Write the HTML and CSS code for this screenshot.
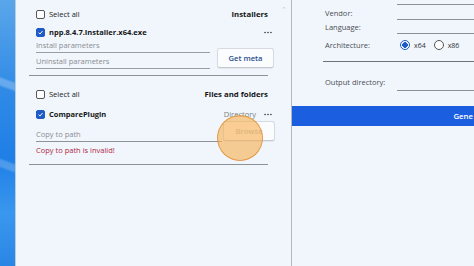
FILE: index.html
```html
<!DOCTYPE html>
<html>
<head>
<meta charset="utf-8">
<link rel="stylesheet" href="styles.css">
</head>
<body>
<div class="screen">
  <div class="desktop"></div>
  <div class="window">
    <section class="left">
      <span class="scroll-up">&#8963;</span>
      <div class="head">
        <label class="check"><span class="box"></span>Select all</label>
        <span class="title">Installers</span>
      </div>
      <div class="item">
        <span class="box checked"><svg viewBox="0 0 10 10"><path d="M2.2 5.2 L4.2 7.2 L7.9 3" fill="none" stroke="#fff" stroke-width="1.4"/></svg></span>
        <span class="name">npp.8.4.7.Installer.x64.exe</span>
        <svg class="more" viewBox="0 0 9 3"><circle cx="1.2" cy="1.5" r="0.9"/><circle cx="4.5" cy="1.5" r="0.9"/><circle cx="7.8" cy="1.5" r="0.9"/></svg>
      </div>
      <div class="params">
        <div class="fields">
          <div class="field">Install parameters</div>
          <div class="field">Uninstall parameters</div>
        </div>
        <button class="btn">Get meta</button>
      </div>
      <div class="sep"></div>

      <div class="head head2">
        <label class="check"><span class="box"></span>Select all</label>
        <span class="title">Files and folders</span>
      </div>
      <div class="item">
        <span class="box checked"><svg viewBox="0 0 10 10"><path d="M2.2 5.2 L4.2 7.2 L7.9 3" fill="none" stroke="#fff" stroke-width="1.4"/></svg></span>
        <span class="name">ComparePlugin</span>
        <span class="dir">Directory</span>
        <svg class="more" viewBox="0 0 9 3"><circle cx="1.2" cy="1.5" r="0.9"/><circle cx="4.5" cy="1.5" r="0.9"/><circle cx="7.8" cy="1.5" r="0.9"/></svg>
      </div>
      <div class="pathrow">
        <div class="field field-path">Copy to path</div>
        <button class="btn btn-disabled">Browse</button>
        <span class="click-marker"></span>
      </div>
      <div class="error">Copy to path is invalid!</div>
      <div class="sep sep2"></div>
    </section>
    <div class="divider"></div>
    <section class="right">
      <div class="row row-top"><span class="label"></span><span class="line"></span></div>
      <div class="row row-vendor"><span class="label">Vendor:</span><span class="line"></span></div>
      <div class="row row-lang"><span class="label">Language:</span><span class="line"></span></div>
      <div class="row row-arch">
        <span class="label">Architecture:</span>
        <span class="radios">
          <span class="radio on"></span><span class="rlabel">x64</span>
          <span class="radio"></span><span class="rlabel">x86</span>
        </span>
      </div>
      <div class="rsep"></div>
      <div class="row row-out"><span class="label">Output directory:</span><span class="line"></span></div>
      <div class="generate"><span class="gen-text">Gene</span></div>
    </section>
  </div>
</div>
</body>
</html>
```
FILE: styles.css
```css
* { box-sizing: border-box; }
html, body { margin: 0; padding: 0; }
body {
  width: 474px;
  height: 266px;
  overflow: hidden;
  font-family: "Open Sans", "Noto Sans", sans-serif;
  font-size: 7.5px;
  color: #1b1b1b;
  background: #eef5fc;
}
.screen { display: flex; width: 474px; height: 266px; }
.desktop {
  width: 16px;
  flex: none;
  background:
    linear-gradient(200deg, transparent 0 30%, rgba(255,255,255,0.25) 31% 33%, transparent 34% 60%, rgba(255,255,255,0.2) 61% 63%, transparent 64%),
    linear-gradient(180deg, #5aa6ea 0%, #2f8ae6 35%, #1f7fe6 60%, #3a97ee 80%, #2a86e4 100%);
  border-right: 1px solid #b7cde2;
}
.window {
  flex: 1;
  display: flex;
  background: #f0f6fc;
}
.left {
  position: relative;
  width: 275px;
  flex: none;
  padding: 6px 16px 0 20px;
  display: flex;
  flex-direction: column;
}
.scroll-up {
  position: absolute;
  right: 4px;
  top: 5px;
  font-size: 7px;
  color: #c8ccd2;
}
.head, .item {
  height: 16px;
  display: flex;
  align-items: center;
}
.item { margin-top: 2px; }
.head2 { margin-top: 10px; }
.head2 + .item { margin-top: 4px; }
.check { display: flex; align-items: center; color: #222; }
.box {
  width: 9px;
  height: 9px;
  border: 1px solid #555;
  border-radius: 2px;
  margin-right: 4px;
  background: #fff;
  flex: none;
  display: inline-flex;
}
.box.checked { background: #1e5bc6; border-color: #1e5bc6; }
.box svg { width: 100%; height: 100%; }
.title { margin-left: auto; font-weight: 700; color: #151515; padding-right: 7px; font-size: 7.8px; }
.name { font-weight: 700; color: #151515; }
.dir { margin-left: auto; color: #7b7f86; margin-right: 8px; }
.more { margin-left: auto; width: 8px; height: 3px; fill: #333; margin-right: 3px; flex: none; }
.dir + .more { margin-left: 0; }
.params { display: flex; align-items: flex-end; margin-top: -3px; }
.fields { flex: 1; }
.field {
  line-height: 14px;
  padding-top: 1px;
  color: #8a8d92;
  border-bottom: 1px solid #9a9ea4;
  margin-right: 7px;
}
.btn {
  font-family: inherit;
  font-size: 7.6px;
  font-weight: 600;
  color: #2a4f8f;
  background: #fbfcfe;
  border: 1px solid #d6dbe2;
  border-bottom-color: #c3c8cf;
  border-radius: 3px;
  width: 57px;
  height: 20px;
  padding: 0;
  box-shadow: 0 1px 1px rgba(0,0,0,0.06);
  margin-bottom: 1px;
  margin-right: 1px;
}
.sep {
  height: 1px;
  background: #8d9196;
  margin: 6px 7px 0 -7px;
}
.sep2 { margin-top: 7px; }
.pathrow {
  position: relative;
  display: flex;
  align-items: flex-start;
  margin-top: -1px;
}
.field-path {
  flex: 1;
  padding-top: 6px;
  margin-right: 1px;
  border-bottom-color: #8f9399;
}
.btn-disabled {
  width: 52px;
  color: #b9bcc2;
  font-weight: 600;
  margin: 0;
}
.click-marker {
  position: absolute;
  left: 181px;
  top: -6px;
  width: 46px;
  height: 46px;
  border-radius: 50%;
  background: rgba(247, 176, 82, 0.62);
  border: 1px solid rgba(222, 140, 50, 0.8);
}
.error {
  color: #b3263f;
  line-height: 14px;
  margin-top: 1px;
}
.divider {
  width: 1px;
  flex: none;
  background: #b5b8bd;
}
.right {
  flex: 1;
  display: flex;
  flex-direction: column;
  min-width: 0;
}
.row {
  display: flex;
  align-items: flex-end;
  padding-left: 33px;
}
.label {
  width: 72px;
  flex: none;
  color: #4a4d52;
  line-height: 12px;
  padding-bottom: 1px;
}
.line {
  flex: 1;
  border-bottom: 1px solid #8d9196;
  align-self: stretch;
}
.row-top { height: 5px; }
.row-top .label { line-height: 0; }
.row-vendor { height: 15px; align-items: center; }
.row-vendor .label, .row-lang .label { padding-bottom: 0; }
.row-lang { height: 14px; align-items: center; }
.row-arch { height: 22px; align-items: center; }
.radios { display: flex; align-items: center; color: #333; }
.radio {
  width: 10px;
  height: 10px;
  border: 1px solid #555;
  border-radius: 50%;
  background: #fff;
  margin-right: 4px;
  margin-left: 3px;
}
.radio.on {
  border: 1px solid #1e5bc6;
  background: radial-gradient(circle, #1e5bc6 0 2.6px, #fff 3px);
}
.rlabel { margin-right: 5px; font-size: 7px; }
.rsep {
  height: 1px;
  background: #6e7278;
  margin: 5px 0 0 31px;
}
.row-out { height: 29px; align-items: flex-end; }
.row-out .label { padding-bottom: 3px; }
.generate {
  margin-top: 15px;
  height: 20px;
  background: #1b5fe0;
  color: #fff;
  font-weight: 600;
  font-size: 7.8px;
  display: flex;
  align-items: center;
  justify-content: flex-end;
  overflow: hidden;
}
.gen-text { padding-right: 1px; }
```
